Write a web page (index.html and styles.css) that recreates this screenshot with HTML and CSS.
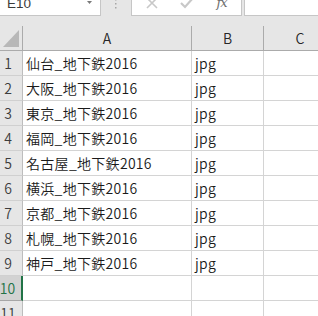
FILE: index.html
```html
<!DOCTYPE html>
<html lang="ja">
<head>
<meta charset="utf-8">
<link rel="stylesheet" href="styles.css">
</head>
<body>
<div class="app">
  <div class="topbar">
    <div class="namebox">
      <span class="nb-text">E10</span>
      <svg class="nb-arrow" width="5" height="3" viewBox="0 0 5 3"><path d="M0 0H5L2.5 3Z" fill="#7a7a7a"/></svg>
    </div>
    <div class="grip">
      <svg width="2" height="10" viewBox="0 0 2 10"><rect x="0" y="0" width="1.5" height="1.5" fill="#a6a6a6"/><rect x="0" y="4" width="1.5" height="1.5" fill="#a6a6a6"/><rect x="0" y="8" width="1.5" height="1.5" fill="#a6a6a6"/></svg>
    </div>
    <div class="fxbox">
      <span class="slot"><svg width="12" height="12" viewBox="0 0 12 12"><path d="M1 1L11 11M11 1L1 11" stroke="#c8c8c8" stroke-width="1.6" fill="none"/></svg></span>
      <span class="slot"><svg width="14" height="12" viewBox="0 0 14 12"><path d="M1 6L5 10L13 1" stroke="#c8c8c8" stroke-width="2.2" fill="none"/></svg></span>
      <span class="slot"><span class="fx">fx</span></span>
    </div>
    <div class="formula"></div>
  </div>
  <div class="grid">
    <div class="corner"><span class="tri"></span></div>
    <div class="ch">A</div>
    <div class="ch">B</div>
    <div class="ch">C</div>

    <div class="rh">1</div><div class="c">仙台_地下鉄2016</div><div class="c">jpg</div><div class="c"></div>
    <div class="rh">2</div><div class="c">大阪_地下鉄2016</div><div class="c">jpg</div><div class="c"></div>
    <div class="rh">3</div><div class="c">東京_地下鉄2016</div><div class="c">jpg</div><div class="c"></div>
    <div class="rh">4</div><div class="c">福岡_地下鉄2016</div><div class="c">jpg</div><div class="c"></div>
    <div class="rh">5</div><div class="c">名古屋_地下鉄2016</div><div class="c">jpg</div><div class="c"></div>
    <div class="rh">6</div><div class="c">横浜_地下鉄2016</div><div class="c">jpg</div><div class="c"></div>
    <div class="rh">7</div><div class="c">京都_地下鉄2016</div><div class="c">jpg</div><div class="c"></div>
    <div class="rh">8</div><div class="c">札幌_地下鉄2016</div><div class="c">jpg</div><div class="c"></div>
    <div class="rh">9</div><div class="c">神戸_地下鉄2016</div><div class="c">jpg</div><div class="c"></div>
    <div class="rh sel">10</div><div class="c"></div><div class="c"></div><div class="c"></div>
    <div class="rh">11</div><div class="c"></div><div class="c"></div><div class="c"></div>
  </div>
</div>
</body>
</html>
```
FILE: styles.css
```css
html, body {
  margin: 0;
  padding: 0;
}
body {
  width: 318px;
  height: 316px;
  overflow: hidden;
  background: #ffffff;
  font-family: "Noto Sans CJK JP", "Noto Sans", sans-serif;
}
.app {
  margin-top: -10px;
  width: 340px;
}
.topbar {
  height: 36px;
  background: #e6e6e6;
  display: flex;
  align-items: flex-start;
}
.namebox {
  box-sizing: border-box;
  width: 101px;
  height: 26px;
  background: #ffffff;
  border-right: 1px solid #c6c6c6;
  border-bottom: 1px solid #c6c6c6;
  display: flex;
  align-items: center;
  padding-left: 7px;
  padding-right: 8px;
}
.nb-text {
  flex: 1;
  font-family: "Liberation Sans", sans-serif;
  font-size: 13.5px;
  color: #3a3a3a;
  line-height: 14px;
  padding-top: 2px;
}
.nb-arrow {
  display: block;
}
.grip {
  width: 30px;
  height: 25px;
  display: flex;
  align-items: center;
  justify-content: center;
  padding-top: 2px;
  box-sizing: border-box;
}
.grip svg {
  display: block;
}
.fxbox {
  box-sizing: border-box;
  width: 111px;
  height: 26px;
  background: #ffffff;
  border: 1px solid #c6c6c6;
  border-top: none;
  display: flex;
  align-items: center;
  padding-left: 2px;
}
.slot {
  width: 35px;
  height: 100%;
  display: flex;
  align-items: center;
  justify-content: center;
}
.slot svg {
  display: block;
}
.fx {
  font-family: "DejaVu Serif", serif;
  font-style: italic;
  font-size: 13px;
  color: #6e6e6e;
  line-height: 14px;
  letter-spacing: -1px;
}
.formula {
  box-sizing: border-box;
  margin-left: 2px;
  flex: 1;
  height: 26px;
  background: #ffffff;
  border-left: 1px solid #c6c6c6;
  border-bottom: 1px solid #c6c6c6;
}
.grid {
  display: grid;
  grid-template-columns: 23px 169px 72px 73px;
  grid-auto-rows: 25px;
}
.grid > div {
  box-sizing: border-box;
}
.corner {
  background: #e6e6e6;
  border-right: 1px solid #ababab;
  border-bottom: 1px solid #ababab;
  display: flex;
  align-items: flex-end;
  justify-content: flex-end;
  padding: 0 3px 3px 0;
}
.tri {
  width: 16px;
  height: 17px;
  background: #b8b8b8;
  clip-path: polygon(100% 0, 100% 100%, 0 100%);
}
.ch {
  background: #e6e6e6;
  border-right: 1px solid #ababab;
  border-bottom: 1px solid #ababab;
  display: flex;
  align-items: center;
  justify-content: center;
  font-size: 14px;
  font-weight: 350;
  color: #262626;
}
.rh {
  background: #e6e6e6;
  border-right: 1px solid #bdbdbd;
  border-bottom: 1px solid #d0d0d0;
  display: flex;
  align-items: center;
  justify-content: center;
  padding-right: 6px;
  font-size: 14px;
  font-weight: 350;
  color: #3c3c3c;
}
.rh.sel {
  background: #d2d2d2;
  border-right: 2px solid #217346;
  border-bottom: 1px solid #a6a6a6;
  color: #217346;
}
.c {
  border-right: 1px solid #d4d4d4;
  border-bottom: 1px solid #d4d4d4;
  display: flex;
  align-items: center;
  padding-left: 3px;
  font-size: 14px;
  font-weight: 350;
  letter-spacing: 0.3px;
  color: #1a1a1a;
  white-space: nowrap;
}
```
